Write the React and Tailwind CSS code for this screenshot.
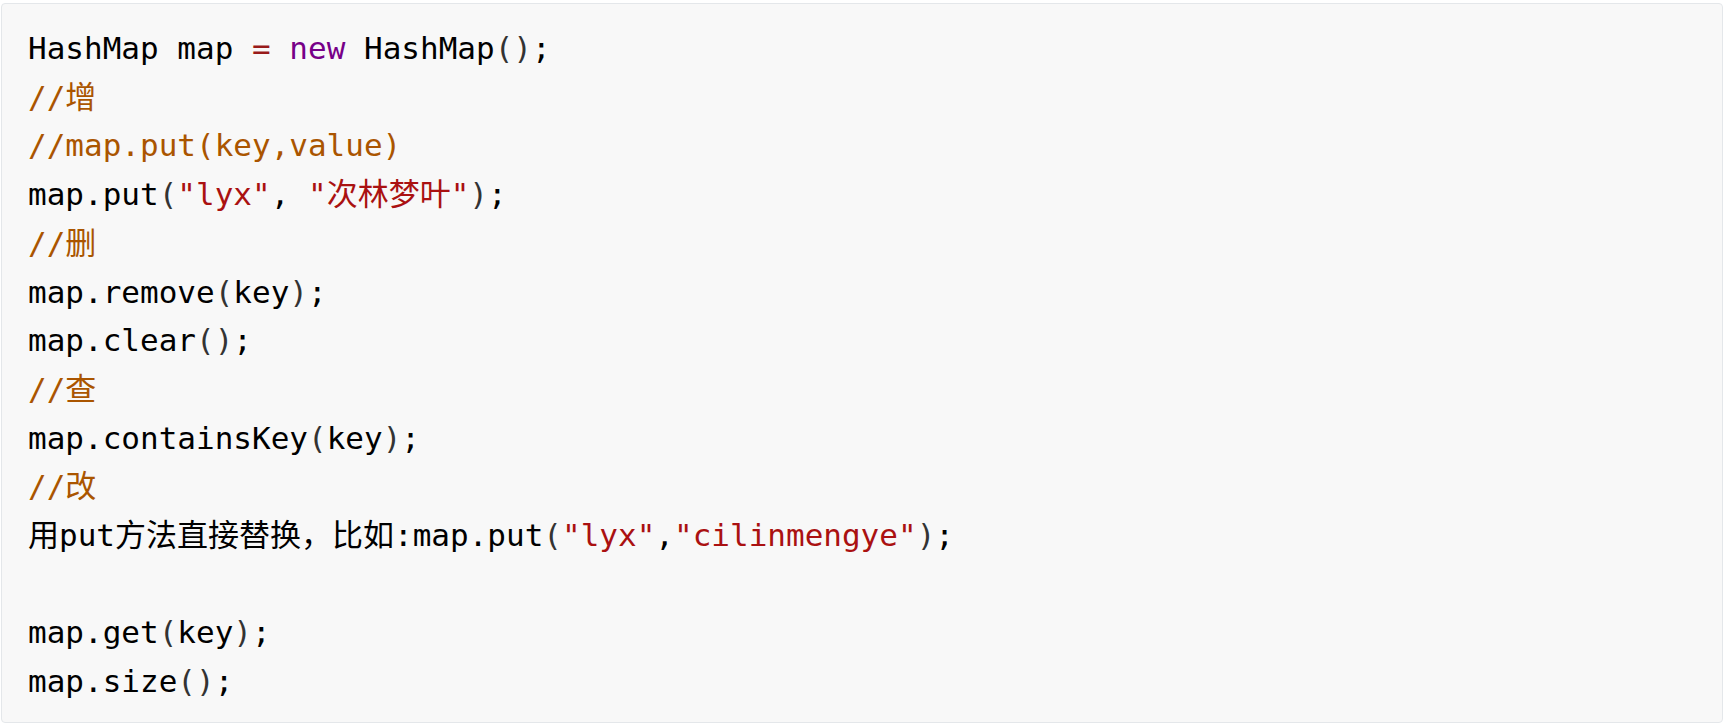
import React from 'react'

// token colours (codemirror default-ish)
const K = ({ children }) => <span className="text-[#770088]">{children}</span>
const C = ({ children }) => <span className="text-[#aa5500]">{children}</span>
const S = ({ children }) => <span className="text-[#aa1111]">{children}</span>
const O = ({ children }) => <span className="text-[#981a1a]">{children}</span>
const P = ({ children }) => <span className="text-[#333333]">{children}</span>

const lines = [
  <>HashMap map <O>=</O> <K>new</K> HashMap<P>()</P>;</>,
  <C>//增</C>,
  <C>//map.put(key,value)</C>,
  <>map.put<P>(</P><S>"lyx"</S>, <S>"次林梦叶"</S><P>)</P>;</>,
  <C>//删</C>,
  <>map.remove<P>(</P>key<P>)</P>;</>,
  <>map.clear<P>()</P>;</>,
  <C>//查</C>,
  <>map.containsKey<P>(</P>key<P>)</P>;</>,
  <C>//改</C>,
  <>用put方法直接替换，比如:map.put<P>(</P><S>"lyx"</S>,<S>"cilinmengye"</S><P>)</P>;</>,
  <>&nbsp;</>,
  <>map.get<P>(</P>key<P>)</P>;</>,
  <>map.size<P>()</P>;</>,
]

export default function App() {
  return (
    <div className="w-[1723px] h-[723px] bg-white overflow-hidden pt-[3px] pl-[1px]">
      <div className="h-[720px] bg-[#f8f8f8] border border-[#e4e7ea] rounded-[4px] pl-[26px] pt-[20px]">
        <pre
          className="m-0 text-[31px] leading-[48.7px] text-black whitespace-pre"
          style={{ fontFamily: '"DejaVu Sans Mono", "Noto Sans CJK SC", monospace' }}
        >
          {lines.map((l, i) => (
            <div key={i}>{l}</div>
          ))}
        </pre>
      </div>
    </div>
  )
}
